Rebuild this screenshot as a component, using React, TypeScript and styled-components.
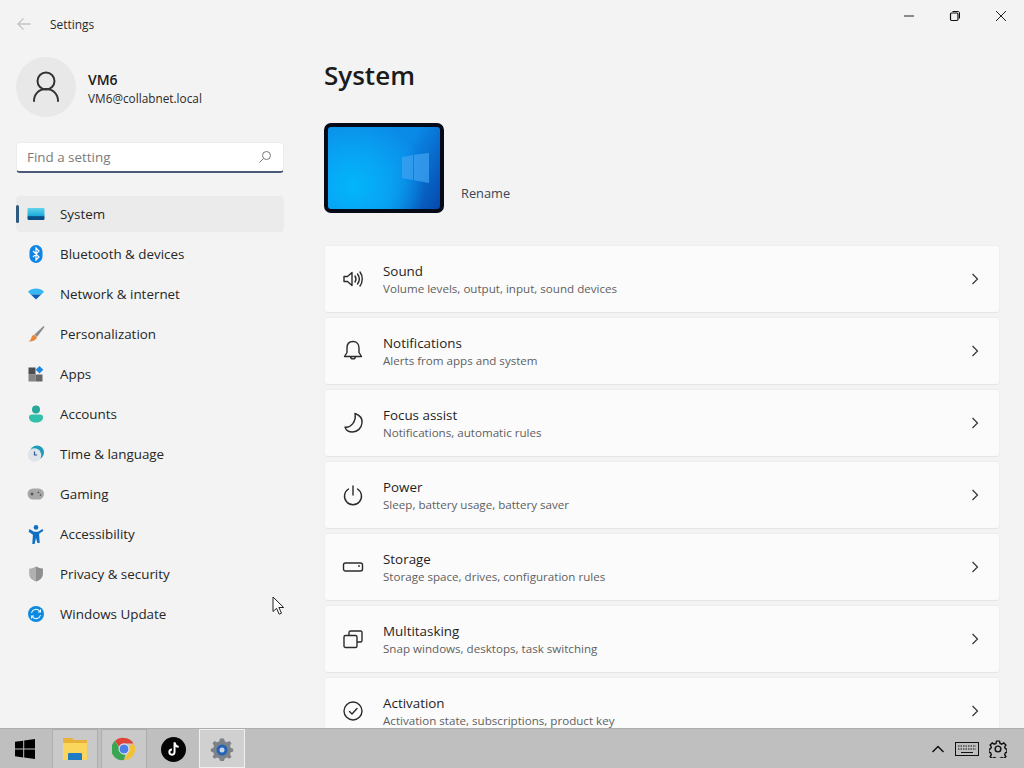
import React from "react";
import styled, { createGlobalStyle } from "styled-components";

const Global = createGlobalStyle`
  html, body { margin: 0; padding: 0; background: #f3f3f3; }
  * { box-sizing: border-box; }
  body { font-family: "Open Sans", "Noto Sans", "Liberation Sans", sans-serif; color: #1b1b1b; }
`;

const Screen = styled.div`
  position: relative;
  width: 1024px;
  height: 768px;
  display: flex;
  flex-direction: column;
  overflow: hidden;
  background: #f3f3f3;
`;
const Body = styled.div`
  flex: 1;
  min-height: 0;
  display: flex;
`;
const Sidebar = styled.aside`
  width: 300px;
  flex: none;
  padding: 0 16px;
`;
const TitleRow = styled.div`
  height: 48px;
  display: flex;
  align-items: center;
  gap: 18px;
  font-size: 11.9px;
  color: #2a2a2a;
`;
const BackIcon = styled.svg`
  width: 16px;
  height: 16px;
  flex: none;
`;
const Profile = styled.div`
  margin-top: 9px;
  display: flex;
  align-items: center;
  gap: 12px;
`;
const Avatar = styled.div`
  width: 60px;
  height: 60px;
  border-radius: 50%;
  background: #e8e8e8;
  display: flex;
  align-items: center;
  justify-content: center;
`;
const ProfileText = styled.div`
  display: flex;
  flex-direction: column;
  gap: 1px;
  margin-top: 3px;
`;
const ProfileName = styled.div`
  font-size: 14px;
  line-height: 18px;
  font-weight: 600;
  color: #1a1a1a;
`;
const ProfileMail = styled.div`
  font-size: 11.8px;
  line-height: 16px;
  color: #2a2a2a;
`;
const Search = styled.div`
  margin-top: 25px;
  height: 31px;
  background: #fff;
  border-radius: 4px;
  border: 1px solid #ececec;
  border-bottom: 2px solid #4a5a78;
  display: flex;
  align-items: center;
  justify-content: space-between;
  padding: 0 11px 0 10px;
  font-size: 13.4px;
  color: #7b7b7b;
`;
const Nav = styled.nav`
  margin-top: 23px;
  display: flex;
  flex-direction: column;
  gap: 4px;
`;
const NavRow = styled.div<{ $active?: boolean }>`
  position: relative;
  height: 36px;
  display: flex;
  align-items: center;
  gap: 14px;
  padding-left: 10px;
  border-radius: 4px;
  font-size: 13.4px;
  color: #262626;
  background: ${(p) => (p.$active ? "#ebebeb" : "transparent")};
`;
const ActiveMark = styled.span`
  position: absolute;
  left: 0;
  top: 9px;
  width: 3px;
  height: 18px;
  border-radius: 2px;
  background: #2d5a7e;
`;
const NavGlyph = styled.svg`
  width: 20px;
  height: 20px;
  flex: none;
`;
const Main = styled.main`
  flex: 1;
  min-width: 0;
  padding: 0 24px;
  overflow: hidden;
`;
const WindowControls = styled.div`
  height: 32px;
  display: flex;
  justify-content: flex-end;
  margin-right: -24px;
`;
const WindowButton = styled.div`
  width: 46px;
  height: 32px;
  display: flex;
  align-items: center;
  justify-content: center;
`;
const Heading = styled.h1`
  margin: 23px 0 0;
  font-size: 26px;
  line-height: 40px;
  font-weight: 600;
  color: #1b1b1b;
`;
const Device = styled.div`
  margin-top: 28px;
  display: flex;
  align-items: flex-end;
  gap: 17px;
`;
const DeviceThumb = styled.div`
  width: 120px;
  height: 90px;
  border: 4px solid #050a18;
  border-radius: 7px;
  background:
    radial-gradient(circle at 22% 72%, #02b6fb 0%, #08a4f3 32%, transparent 68%),
    linear-gradient(118deg, #0b8ce4 0%, #0a8ae8 58%, #0648ac 100%);
  display: flex;
  align-items: center;
  justify-content: flex-end;
  padding-right: 11px;
`;
const RenameLink = styled.div`
  font-size: 12.8px;
  line-height: 18px;
  margin-bottom: 11px;
  color: #3b4656;
`;
const Cards = styled.div`
  margin-top: 32px;
  display: flex;
  flex-direction: column;
  gap: 4px;
`;
const Card = styled.div`
  flex: none;
  height: 68px;
  background: #fbfbfb;
  border: 1px solid #efefef;
  border-bottom-color: #e6e6e6;
  border-radius: 4px;
  display: flex;
  align-items: center;
  padding: 0 18px 0 17px;
`;
const CardIcon = styled.svg`
  width: 22px;
  height: 22px;
  flex: none;
  margin-right: 19px;
`;
const CardText = styled.div`
  flex: 1;
  display: flex;
  flex-direction: column;
  padding-top: 2px;
`;
const CardTitle = styled.div`
  font-size: 13.4px;
  line-height: 18px;
  color: #1f1f1f;
`;
const CardSub = styled.div`
  font-size: 11.6px;
  line-height: 18px;
  color: #5f5f5f;
`;
const Chevron = styled.svg`
  width: 12px;
  height: 12px;
  flex: none;
`;
const Taskbar = styled.footer`
  flex: none;
  height: 40px;
  background: #bfbfbf;
  border-top: 1px solid #adadad;
  display: flex;
  align-items: stretch;
`;
const StartButton = styled.div`
  width: 52px;
  padding-right: 3px;
  display: flex;
  align-items: center;
  justify-content: center;
`;
const TaskButton = styled.div<{ $state?: "open" | "active" }>`
  width: 46px;
  margin-right: 3px;
  display: flex;
  align-items: center;
  justify-content: center;
  background: ${(p) => (p.$state === "active" ? "#d0d0d0" : p.$state === "open" ? "#c9c9c9" : "transparent")};
  border: 1px solid ${(p) => (p.$state === "active" ? "#f0f0f0" : p.$state === "open" ? "#aeaeae" : "transparent")};
  border-bottom: ${(p) => (p.$state === "active" ? "1px solid #f0f0f0" : "none")};
`;
const Tray = styled.div`
  margin-left: auto;
  display: flex;
  align-items: center;
  gap: 10px;
  padding-right: 17px;
`;
const Pointer = styled.svg`
  position: absolute;
  left: 272px;
  top: 596px;
  width: 14px;
  height: 20px;
`;

const S = { fill: "none", stroke: "#2b2b2b", strokeWidth: 1.4, strokeLinecap: "round", strokeLinejoin: "round" } as const;

const navItems: { label: string; icon: React.ReactNode }[] = [
  { label: "System", icon: <><defs><linearGradient id="sys" x1="0" y1="0" x2="0" y2="1"><stop offset="0" stopColor="#5fd4ea" /><stop offset="0.7" stopColor="#19a6d8" /><stop offset="0.71" stopColor="#0a4f86" /><stop offset="1" stopColor="#0a4f86" /></linearGradient></defs><rect x="1.5" y="4" width="17" height="12" rx="1.2" fill="url(#sys)" /></> },
  { label: "Bluetooth & devices", icon: <><rect x="3.5" y="1" width="13" height="18" rx="6.5" fill="#0e84e4" /><path d="M7 7l6 6-3 3V4l3 3-6 6" fill="none" stroke="#fff" strokeWidth="1.2" /></> },
  { label: "Network & internet", icon: <><path d="M2 7.5C6 3.6 14 3.6 18 7.5L15.5 10.5H4.5Z" fill="#38b6f4" /><path d="M4.8 10.5h10.4L10 15.5Z" fill="#0c5fb4" /></> },
  { label: "Personalization", icon: <><path d="M17.500 2L8.500 10.500l2.500 2.500 7.500-10z" fill="#8c8c8c" /><path d="M8.200 10.800l2.800 2.600c-1.200 3-4.400 4.200-8.500 4 2.200-1 2.400-2.400 3-4.200.6-1.500 1.500-2.400 2.700-2.400z" fill="#e8873a" /></> },
  { label: "Apps", icon: <><rect x="2.500" y="3.500" width="7" height="7" fill="#4d4d4d" /><rect x="2.500" y="10.500" width="7" height="7" fill="#858585" /><rect x="9.500" y="10.500" width="7" height="7" fill="#666" /><path d="M13.500 2l3.800 3.800-3.800 3.800-3.800-3.800z" fill="#1e86dc" /></> },
  { label: "Accounts", icon: <><circle cx="10" cy="5.500" r="4" fill="#27a89a" /><path d="M3 13.500c0-2 1-3 3-3h8c2 0 3 1 3 3 0 3-3 5-7 5s-7-2-7-5z" fill="#30c0ac" /></> },
  { label: "Time & language", icon: <><circle cx="11" cy="8.500" r="7" fill="#1c9cb8" /><circle cx="8.500" cy="11" r="6.800" fill="#dfe3ea" /><path d="M8.500 7.500V11h2.600" fill="none" stroke="#2a5a88" strokeWidth="1.200" /></> },
  { label: "Gaming", icon: <><rect x="1.500" y="4.500" width="16.500" height="11" rx="5.500" fill="#a8a8a8" /><path d="M4.500 10h3M6 8.500v3" stroke="#3e3e3e" strokeWidth="1" /><circle cx="12.500" cy="8.500" r=".8" fill="#3e3e3e" /><circle cx="14.500" cy="11" r=".8" fill="#3e3e3e" /></> },
  { label: "Accessibility", icon: <><circle cx="10" cy="3.400" r="2.300" fill="#0e6fc4" /><path d="M3.500 5l4.500 2.800h4L16.500 5l.9 1.700-4.300 3 .6 9.300h-2.300L10 14l-1.400 6H6.300l.6-9.300-4.300-3z" fill="#0e6fc4" /></> },
  { label: "Privacy & security", icon: <><path d="M10 2.500c2 1.300 4.300 2 6.800 2.100v5.400c0 3.800-3 6.100-6.800 7.500C6.200 16.100 3.200 13.800 3.200 10V4.600c2.500-.1 4.800-.8 6.800-2.100z" fill="#b0b0b0" /><path d="M10 2.500c2 1.300 4.300 2 6.800 2.100v5.400c0 3.800-3 6.100-6.800 7.500z" fill="#8f8f8f" /></> },
  { label: "Windows Update", icon: <><circle cx="10" cy="10" r="8" fill="#0c8ae0" /><path d="M5.500 9a4.600 4.600 0 0 1 8-2l1 1M14.500 11a4.600 4.600 0 0 1-8 2l-1-1M14.500 5.500V8H12M5.500 14.500V12H8" fill="none" stroke="#e6f6ff" strokeWidth="1.100" /></> },
];

const cards: { title: string; sub: string; icon: React.ReactNode }[] = [
  { title: "Sound", sub: "Volume levels, output, input, sound devices", icon: <path {...S} d="M2 8.500h3.500L10 4.500v13l-4.500-4H2zM13 8c1.200 1.800 1.200 4.200 0 6M15.500 6c2.200 3 2.200 7 0 10M18 4c3 4 3 10 0 14" /> },
  { title: "Notifications", sub: "Alerts from apps and system", icon: <path {...S} d="M11 1.500c-4 0-6 2.800-6 6.500v4.500L2.500 16.500h17L17 12.500V8c0-3.700-2-6.500-6-6.500zM8.500 16.500c0 3.200 5 3.200 5 0" /> },
  { title: "Focus assist", sub: "Notifications, automatic rules", icon: <path {...S} d="M13 1.500c4.500 1.500 7.500 5 7 9.500-.5 5-4.500 9-9.500 9-3.500 0-6.500-2-7.500-4.800 5.500.8 11.500-5.200 10-13.700z" /> },
  { title: "Power", sub: "Sleep, battery usage, battery saver", icon: <path {...S} d="M11 2v9M6.500 5a8.500 8.500 0 1 0 9 0" /> },
  { title: "Storage", sub: "Storage space, drives, configuration rules", icon: <><rect {...S} x="1.500" y="7" width="19" height="8" rx="2" /><circle cx="17" cy="10" r=".9" fill="#2b2b2b" /></> },
  { title: "Multitasking", sub: "Snap windows, desktops, task switching", icon: <path {...S} d="M7 7.500V4.500C7 3.700 7.700 3 8.500 3h10c.8 0 1.500.7 1.500 1.500v8c0 .8-.7 1.500-1.500 1.500H15M3.500 7.500H13.500c.8 0 1.500.7 1.500 1.500v9c0 .8-.7 1.500-1.500 1.500H3.500C2.700 19.500 2 18.800 2 18v-9C2 8.200 2.700 7.500 3.500 7.500z" /> },
  { title: "Activation", sub: "Activation state, subscriptions, product key", icon: <><circle {...S} cx="11" cy="11" r="9" /><path {...S} d="M7.500 11.500l2.500 2.500 5-5.500" /></> },
];

export default function App() {
  return (
    <Screen>
      <Global />
      <Body>
        <Sidebar>
          <TitleRow>
            <BackIcon viewBox="0 0 16 16"><path d="M14.500 8H2M7.500 2.500L2 8l5.500 5.500" fill="none" stroke="#c4c4c4" strokeWidth="1.300" /></BackIcon>
            <span>Settings</span>
          </TitleRow>
          <Profile>
            <Avatar>
              <svg width="30" height="34" viewBox="0 0 30 34"><circle cx="15" cy="11" r="8.500" {...S} stroke="#333" strokeWidth="2" /><path d="M3 31c0-7 5-12 12-12s12 5 12 12" {...S} stroke="#333" strokeWidth="2" /></svg>
            </Avatar>
            <ProfileText>
              <ProfileName>VM6</ProfileName>
              <ProfileMail>VM6@collabnet.local</ProfileMail>
            </ProfileText>
          </Profile>
          <Search>
            <span>Find a setting</span>
            <svg width="14" height="14" viewBox="0 0 14 14"><circle cx="8.500" cy="5.500" r="4" fill="none" stroke="#777" /><path d="M5.500 8.500L1.500 12.500" stroke="#777" /></svg>
          </Search>
          <Nav>
            {navItems.map((n, i) => (
              <NavRow key={n.label} $active={i === 0}>
                {i === 0 && <ActiveMark />}
                <NavGlyph viewBox="0 0 20 20">{n.icon}</NavGlyph>
                <span>{n.label}</span>
              </NavRow>
            ))}
          </Nav>
        </Sidebar>
        <Main>
          <WindowControls>
            <WindowButton><svg width="12" height="12" viewBox="0 0 12 12"><path d="M1 6h10" stroke="#222" /></svg></WindowButton>
            <WindowButton><svg width="12" height="12" viewBox="0 0 12 12"><rect x="1.500" y="3" width="7.500" height="7.500" rx="1.200" fill="none" stroke="#111" strokeWidth="1.200" /><path d="M3.500 1.500h5.500c1 0 1.500.5 1.500 1.500v5.500" fill="none" stroke="#111" /></svg></WindowButton>
            <WindowButton><svg width="12" height="12" viewBox="0 0 12 12"><path d="M1 1l10 10M11 1L1 11" stroke="#222" /></svg></WindowButton>
          </WindowControls>
          <Heading>System</Heading>
          <Device>
            <DeviceThumb>
              <svg width="27" height="30" viewBox="0 0 27 30"><path d="M0 4l11-2v25L0 25zM12 1.800L27 0v30l-15-2.800z" fill="#3ea2f0" opacity="0.75" /></svg>
            </DeviceThumb>
            <RenameLink>Rename</RenameLink>
          </Device>
          <Cards>
            {cards.map((c) => (
              <Card key={c.title}>
                <CardIcon viewBox="0 0 22 22">{c.icon}</CardIcon>
                <CardText>
                  <CardTitle>{c.title}</CardTitle>
                  <CardSub>{c.sub}</CardSub>
                </CardText>
                <Chevron viewBox="0 0 12 12"><path d="M3.500 1l5 5-5 5" fill="none" stroke="#333" strokeWidth="1.200" /></Chevron>
              </Card>
            ))}
          </Cards>
        </Main>
      </Body>
      <Taskbar>
        <StartButton>
          <svg width="20" height="20" viewBox="0 0 20 20"><path d="M0 2.800l8.200-1.100v7.900H0zM9.200 1.500L20 0v9.600H9.200zM0 10.600h8.200v7.800L0 17.200zM9.200 10.600H20V20L9.200 18.500z" fill="#000" /></svg>
        </StartButton>
        <TaskButton $state="open">
          <svg width="26" height="24" viewBox="0 0 26 24"><path d="M1 1h9l2 2h13v19H1z" fill="#e8b23a" /><path d="M1 6h24v17H1z" fill="#fbd65c" /><path d="M7 16h12a1 1 0 0 1 1 1v6H6v-6a1 1 0 0 1 1-1z" fill="#1f7cc4" /></svg>
        </TaskButton>
        <TaskButton $state="open">
          <svg width="24" height="24" viewBox="0 0 24 24"><path d="M12 1a11 11 0 0 1 9.530 5.500H12a5.500 5.500 0 0 0-5 3.200L3 3.800A11 11 0 0 1 12 1z" fill="#de4437" /><path d="M21.530 6.500A11 11 0 0 1 12 23l4.800-8.250A5.500 5.500 0 0 0 16.800 9z" fill="#f3c233" /><path d="M12 23A11 11 0 0 1 3 3.800l4.800 8.300a5.500 5.500 0 0 0 5.600 5.300z" fill="#3ba552" /><circle cx="12" cy="12" r="5" fill="#4a7ee8" stroke="#eee" strokeWidth="1" /></svg>
        </TaskButton>
        <TaskButton>
          <svg width="25" height="25" viewBox="0 0 24 24"><circle cx="12" cy="12" r="12" fill="#050505" /><path d="M13 5v9.500a2.500 2.500 0 1 1-2.500-2.500M13 5.500c.4 2.300 2 3.700 4 4" fill="none" stroke="#fff" strokeWidth="1.900" /></svg>
        </TaskButton>
        <TaskButton $state="active">
          <svg width="24" height="24" viewBox="0 0 24 24"><path d="M12 1.500l2 .1.700 2.700 2.300 1 2.500-1.300 2 2.300-1.500 2.200.8 2.400 2.400.8v2.800l-2.400.7-.8 2.300 1.500 2.300-2 2-2.500-1.300-2.300 1-.7 2.500h-4l-.7-2.500-2.300-1-2.500 1.300-2-2 1.500-2.300-.8-2.300L.8 14.500v-2.800l2.400-.8.800-2.400-1.500-2.200 2-2.300 2.500 1.300 2.300-1 .7-2.700z" fill="#7d8288" /><circle cx="12" cy="13" r="5.500" fill="#2364b8" /><circle cx="12" cy="13" r="2.500" fill="#c9d4e4" /></svg>
        </TaskButton>
        <Tray>
          <svg width="14" height="10" viewBox="0 0 14 10"><path d="M1.500 8l5.500-5.500 5.500 5.500" fill="none" stroke="#111" strokeWidth="1.500" /></svg>
          <svg width="24" height="14" viewBox="0 0 24 14"><rect x=".5" y=".5" width="23" height="13" fill="none" stroke="#111" /><path d="M3 4h18M3 7h18" stroke="#111" strokeDasharray="1.500 1" /><path d="M6 10.500h12" stroke="#111" /></svg>
          <svg width="18" height="18" viewBox="0 0 24 24" fill="none" stroke="#111" strokeWidth="1.900"><circle cx="12" cy="12" r="3.800" /><path d="M10 1.500h4l.7 3 2.400 1 2.600-1.600 2.800 2.800-1.600 2.600 1 2.400 2.100.7v4l-2.100.7-1 2.400 1.600 2.600-2.800 2.800-2.600-1.600-2.400 1-.7 2.100h-4l-.7-2.100-2.400-1-2.600 1.600-2.800-2.800 1.600-2.600-1-2.400-2.100-.7v-4l2.100-.7 1-2.400-1.600-2.600 2.800-2.800 2.600 1.600 2.400-1z" /></svg>
        </Tray>
      </Taskbar>
      <Pointer viewBox="0 0 14 20"><path d="M1 1v14.500l3.600-3.200 2.600 5.900 2.300-1-2.600-5.700h4.800z" fill="#fff" stroke="#222" strokeWidth="1" /></Pointer>
    </Screen>
  );
}
